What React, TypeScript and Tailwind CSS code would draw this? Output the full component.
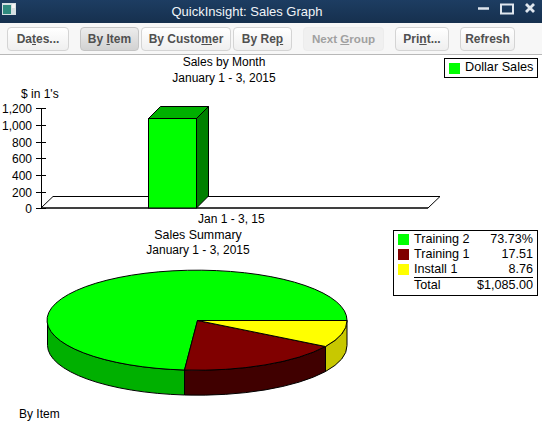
const buttons = [
  { pre: "Da", key: "t", post: "es...", w: "w-[62px]", ml: "ml-[7px]" },
  { pre: "By ", key: "I", post: "tem", w: "w-[59px]", ml: "ml-[11px]", pressed: true },
  { pre: "By Custo", key: "m", post: "er", w: "w-[90px]", ml: "ml-[2px]" },
  { pre: "By Re", key: "p", post: "", w: "w-[59px]", ml: "ml-[2px]" },
  { pre: "Next ", key: "G", post: "roup", w: "w-[81px]", ml: "ml-[11px]", disabled: true },
  { pre: "Pri", key: "n", post: "t...", w: "w-[54px]", ml: "ml-[11px]" },
  { pre: "Refresh", key: "", post: "", w: "w-[55px]", ml: "ml-[11px]" },
];

const ticks = [
  { label: "1,200", y: 108 },
  { label: "1,000", y: 125 },
  { label: "800", y: 142 },
  { label: "600", y: 158 },
  { label: "400", y: 175 },
  { label: "200", y: 192 },
  { label: "0", y: 208 },
];

const summary = [
  { name: "Training 2", value: "73.73%", color: "bg-[#00ff00]" },
  { name: "Training 1", value: "17.51", color: "bg-[#800000]" },
  { name: "Install 1", value: "8.76", color: "bg-[#ffff00]" },
];

function ToolButton({ b }: { b: (typeof buttons)[number] }) {
  let look = "border-[#d4d4d4] bg-gradient-to-b from-white to-[#efefef] text-[#505050] text-xs";
  if (b.pressed) look = "border-[#c4c4c4] bg-gradient-to-b from-[#ececec] to-[#d2d2d2] text-[#505050] text-xs";
  if (b.disabled) look = "border-[#ececec] bg-[#f0f0f0] text-[#a0a0a0] text-[11.6px]";
  return (
    <div className={`${b.w} ${b.ml} ${look} h-6 border rounded-sm flex items-center justify-center font-bold whitespace-pre`}>
      {b.pre}
      {b.key && <u>{b.key}</u>}
      {b.post}
    </div>
  );
}

function Charts() {
  return (
    <svg width="542" height="368" viewBox="0 55 542 368" className="block" fontSize="12" fill="#000">
      {/* bar chart */}
      <text x="224" y="66" textAnchor="middle">Sales by Month</text>
      <text x="224" y="82" textAnchor="middle">January 1 - 3, 2015</text>
      <text x="21" y="98">$ in 1's</text>
      <path d="M41 208L53 196.5H440L428 208Z" fill="#fff" stroke="#000" />
      <path d="M41.5 108V208M41.5 208H428" stroke="#000" fill="none" />
      {ticks.map((t) => (
        <g key={t.label}>
          <path d={`M36 ${t.y + 0.5}H46`} stroke="#000" />
          <text x="32" y={t.y + 5} textAnchor="end">{t.label}</text>
        </g>
      ))}
      <path d="M148.5 118.5L160.5 106.5H208.5L196.5 118.5Z" fill="#00b000" stroke="#000" />
      <path d="M196.5 118.5L208.5 106.5V196L196.5 208Z" fill="#008000" stroke="#000" />
      <rect x="148.5" y="118.5" width="48" height="89.5" fill="#00ff00" stroke="#000" />
      <text x="198" y="223">Jan 1 - 3, 15</text>

      {/* pie chart */}
      <text x="198" y="239" textAnchor="middle" fontSize="12.4">Sales Summary</text>
      <text x="198" y="254" textAnchor="middle">January 1 - 3, 2015</text>
      <path d="M47.5 320.5V345.5A150 50 0 0 0 184.5 395V370A150 50 0 0 1 47.5 320.5Z" fill="#00b000" stroke="#000" />
      <path d="M184.5 370V395A150 50 0 0 0 325.5 371.5V346.5A150 50 0 0 1 184.5 370Z" fill="#400000" stroke="#000" />
      <path d="M325.5 346.5V371.5A150 50 0 0 0 347 345.5V320.5A150 50 0 0 1 325.5 346.5Z" fill="#c8c800" stroke="#000" />
      <path d="M197.5 320.5L347 320.5A150 50 0 1 0 184.5 370Z" fill="#00ff00" stroke="#000" />
      <path d="M197.5 320.5L325.5 346.5A150 50 0 0 1 184.5 370Z" fill="#800000" stroke="#000" />
      <path d="M197.5 320.5H347A150 50 0 0 1 325.5 346.5Z" fill="#ffff00" stroke="#000" />
      <text x="19" y="418">By Item</text>
    </svg>
  );
}

export default function App() {
  return (
    <div className="w-[542px] h-[422px] bg-white overflow-hidden relative font-['Liberation_Sans',Arial,sans-serif]">
      {/* Title bar */}
      <div className="h-[23px] bg-gradient-to-b from-[#1d3d62] to-[#16304e] flex items-start relative">
        <svg width="14" height="12" viewBox="0 0 14 12" className="ml-0.5 mt-[3px]">
          <rect width="14" height="12" fill="#d5dfe2" />
          <rect x="1" y="2" width="8" height="9" fill="#2f8a7f" />
          <rect x="10" y="1" width="3" height="4" fill="#f4f4f4" />
        </svg>
        <div className="absolute inset-0 flex items-center justify-center pr-[48px] text-[13px] text-[#f0f4f8]">QuickInsight: Sales Graph</div>
        <svg width="58" height="14" viewBox="0 0 58 14" className="ml-auto mr-[6px] mt-0.5 relative" fill="none" stroke="#dfe6ee">
          <path d="M0 6.5H11" strokeWidth="2.5" />
          <rect x="23" y="2.5" width="12" height="9" strokeWidth="2" />
          <path d="M48 2L56 10M56 2L48 10" strokeWidth="2.8" />
        </svg>
      </div>

      {/* Toolbar */}
      <div className="h-[32px] bg-[#f7f7f7] border-b border-[#b8b8b8] flex items-center">
        {buttons.map((b) => (
          <ToolButton key={b.pre + b.key} b={b} />
        ))}
      </div>

      <Charts />

      {/* Top legend */}
      <div className="absolute left-[444px] top-[58px] w-[94px] h-5 border border-black bg-white flex items-center gap-[5px] pl-[4px] text-[12.7px]">
        <div className="w-[11px] h-[11px] bg-[#00ff00]" />
        Dollar Sales
      </div>

      {/* Summary legend */}
      <div className="absolute left-[393px] top-[230px] w-[145px] h-[66px] border border-black bg-white pl-1 pr-[4px] pt-px text-[12.6px] leading-[15px]">
        {summary.map((s) => (
          <div key={s.name} className="flex items-center">
            <div className={`w-[11px] h-[11px] ${s.color}`} />
            <span className="ml-[5px]">{s.name}</span>
            <span className="ml-auto">{s.value}</span>
          </div>
        ))}
        <div className="flex ml-4 border-t border-black">
          <span>Total</span>
          <span className="ml-auto">$1,085.00</span>
        </div>
      </div>
    </div>
  );
}
